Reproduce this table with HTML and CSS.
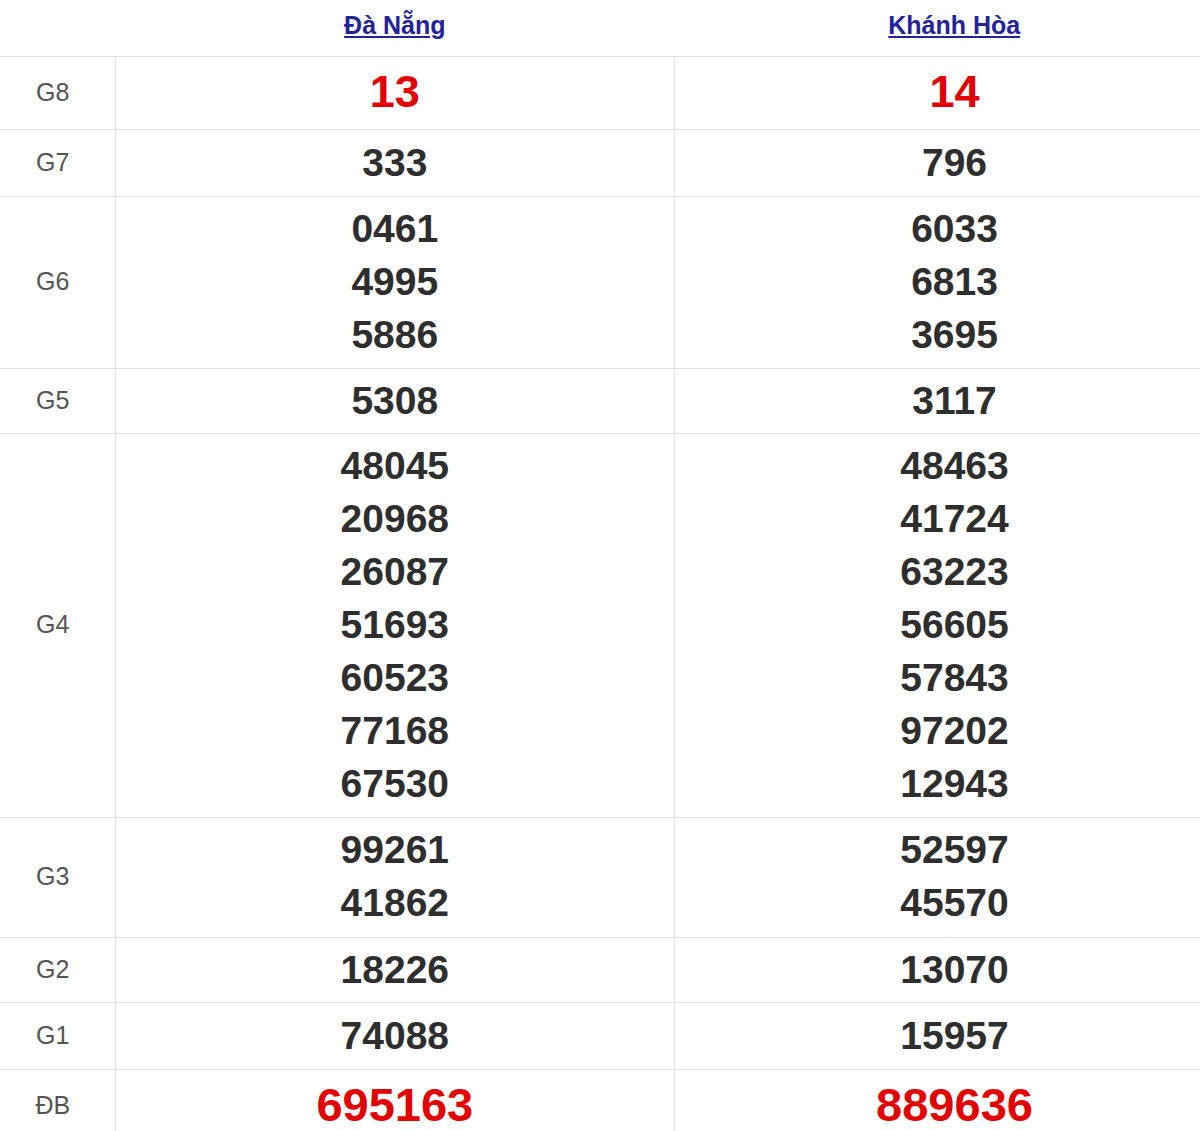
FILE: index.html
```html
<!DOCTYPE html>
<html lang="vi">
<head>
<meta charset="utf-8">
<title>Kết quả xổ số</title>
<link rel="stylesheet" href="styles.css">
</head>
<body>
<table class="kq">
  <colgroup><col class="c-label"><col class="c-prov"><col class="c-prov"></colgroup>
  <thead>
    <tr class="head"><th></th><th><a href="#">Đà Nẵng</a></th><th><a href="#">Khánh Hòa</a></th></tr>
  </thead>
  <tbody>
    <tr class="g8"><td class="lbl">G8</td><td class="num red">13</td><td class="num red">14</td></tr>
    <tr class="g7"><td class="lbl">G7</td><td class="num">333</td><td class="num">796</td></tr>
    <tr><td class="lbl">G6</td><td class="num">0461<br>4995<br>5886</td><td class="num">6033<br>6813<br>3695</td></tr>
    <tr class="g5"><td class="lbl">G5</td><td class="num">5308</td><td class="num">3117</td></tr>
    <tr><td class="lbl">G4</td><td class="num">48045<br>20968<br>26087<br>51693<br>60523<br>77168<br>67530</td><td class="num">48463<br>41724<br>63223<br>56605<br>57843<br>97202<br>12943</td></tr>
    <tr class="g3"><td class="lbl">G3</td><td class="num">99261<br>41862</td><td class="num">52597<br>45570</td></tr>
    <tr class="g5"><td class="lbl">G2</td><td class="num">18226</td><td class="num">13070</td></tr>
    <tr class="g7"><td class="lbl">G1</td><td class="num">74088</td><td class="num">15957</td></tr>
    <tr class="db"><td class="lbl">ĐB</td><td class="num red">695163</td><td class="num red">889636</td></tr>
  </tbody>
</table>
</body>
</html>
```
FILE: styles.css
```css
html, body {
  margin: 0;
  padding: 0;
  background: #fff;
  overflow: hidden;
}
body {
  font-family: "Liberation Sans", Arial, sans-serif;
  color: #333;
}
.kq {
  border-collapse: collapse;
  table-layout: fixed;
  width: 1234px;
}
.c-label { width: 115px; }
.c-prov { width: 559px; }
.head th {
  height: 56px;
  padding: 0;
  text-align: center;
  vertical-align: middle;
  font-weight: bold;
  font-size: 25px;
  border-bottom: 1px solid #e2e2e2;
}
.head th a {
  color: #22229a;
  text-decoration: underline;
  text-decoration-thickness: 2px;
  text-underline-offset: 2px;
  position: relative;
  top: -3px;
}
tbody td {
  border-top: 1px solid #e2e2e2;
  border-left: 1px solid #e2e2e2;
  padding: 5px 0 7px;
  text-align: center;
  vertical-align: middle;
}
tbody td.lbl {
  border-left: none;
  font-size: 25px;
  color: #555;
  padding-right: 9px;
}
td.num {
  font-weight: bold;
  font-size: 39px;
  line-height: 53px;
  color: #2e2e2e;
}
.g7 td.num { padding-top: 6px; }
.g5 td.num { padding-bottom: 6px; }
.g3 td.num { padding-bottom: 8px; }
.g8 td.num {
  font-size: 45px;
  line-height: 60px;
}
.db td.num {
  font-size: 47px;
  line-height: 60px;
}
td.red { color: #e30000; }
```
